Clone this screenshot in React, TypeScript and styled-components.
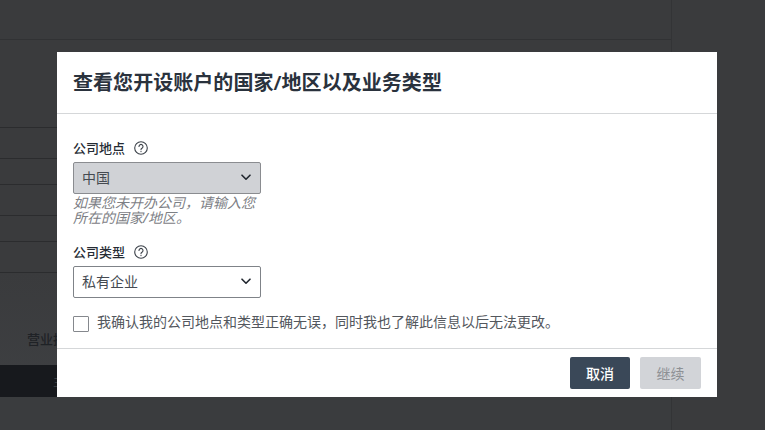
import React from "react";
import styled, { createGlobalStyle } from "styled-components";

const Global = createGlobalStyle`
  html, body { margin: 0; padding: 0; background: #3a3b3d; }
  body { font-family: "Noto Sans", "Noto Sans CJK SC", sans-serif; }
  * { box-sizing: border-box; }
`;

const Page = styled.div`
  position: relative;
  width: 765px;
  height: 430px;
  overflow: hidden;
  background: #3a3b3d;
`;

const BackPanel = styled.div`
  width: 672px;
  height: 430px;
  border-right: 1px solid #333436;
  display: flex;
  flex-direction: column;
`;

const TopBand = styled.div`
  height: 40px;
  border-bottom: 1px solid #313234;
  flex: none;
`;

const RowList = styled.div`
  margin-top: 87px;
  border-top: 1px solid #2b2c2e;
  flex: none;
`;

const BackRow = styled.div<{ $h: number }>`
  height: ${(p) => p.$h}px;
  border-bottom: 1px solid #2b2c2e;
`;

const LowerArea = styled.div`
  flex: 1;
  display: flex;
  flex-direction: column;
  justify-content: flex-end;
  background: linear-gradient(#3a3b3d, #3f4144);
`;

const BackLabel = styled.div`
  height: 92px;
  padding: 57px 0 0 27px;
  font-size: 13px;
  font-weight: 500;
  line-height: 18px;
  color: #1f2226;
  white-space: nowrap;
`;

const DarkBar = styled.div`
  height: 32px;
  background: #17191d;
  padding-left: 53px;
  font-size: 13px;
  line-height: 32px;
  color: #3a3d41;
`;

const BottomGap = styled.div`
  height: 34px;
  background: #3a3c3e;
`;

const Modal = styled.div`
  position: absolute;
  left: 57px;
  top: 52px;
  width: 660px;
  height: 345px;
  background: #fff;
  display: flex;
  flex-direction: column;
`;

const Header = styled.div`
  height: 62px;
  flex: none;
  padding: 17px 16px 0;
  border-bottom: 1px solid #d5d7d9;
`;

const Title = styled.h2`
  margin: 0;
  font-size: 20px;
  line-height: 28px;
  font-weight: 600;
  letter-spacing: 0.05px;
  color: #2a323d;
`;

const Body = styled.div`
  flex: 1;
  padding: 26px 16px 0;
  display: flex;
  flex-direction: column;
`;

const LabelRow = styled.div`
  display: flex;
  align-items: center;
  gap: 9px;
  height: 16px;
  margin-bottom: 6px;
`;

const Label = styled.span`
  font-size: 13px;
  line-height: 16px;
  font-weight: 500;
  color: #262c34;
`;

const SelectBox = styled.div<{ $disabled?: boolean }>`
  width: 188px;
  height: 32px;
  flex: none;
  border: 1px solid ${(p) => (p.$disabled ? "#8a8c90" : "#7f8388")};
  border-radius: 2px;
  background: ${(p) => (p.$disabled ? "#d0d2d6" : "#fff")};
  display: flex;
  align-items: center;
  justify-content: space-between;
  padding: 0 9px 2px 8px;
  font-size: 14px;
  color: #454a51;
`;

const Hint = styled.div`
  width: 188px;
  margin-top: 1px;
  font-size: 14px;
  line-height: 15px;
  font-style: italic;
  color: #7d8085;
  height: 30px;
  margin-bottom: 19px;
`;

const CheckRow = styled.div`
  display: flex;
  align-items: flex-start;
  gap: 8px;
  margin-top: 17px;
`;

const CheckBox = styled.span`
  width: 16px;
  height: 16px;
  margin-top: 1px;
  flex: none;
  border: 1px solid #85888d;
  border-radius: 1px;
  background: #fff;
`;

const CheckText = styled.span`
  font-size: 14px;
  line-height: 14px;
  color: #53575d;
  white-space: nowrap;
`;

const Footer = styled.div`
  height: 49px;
  flex: none;
  border-top: 1px solid #d5d7d9;
  padding: 8px 16px 0 0;
  display: flex;
  justify-content: flex-end;
  gap: 10px;
`;

const Button = styled.div<{ $primary?: boolean }>`
  width: ${(p) => (p.$primary ? 60 : 61)}px;
  height: 32px;
  border-radius: 2px;
  background: ${(p) => (p.$primary ? "#3a4858" : "#d2d4d8")};
  color: ${(p) => (p.$primary ? "#ffffff" : "#8d9094")};
  font-size: 14px;
  font-weight: ${(p) => (p.$primary ? 500 : 400)};
  display: flex;
  align-items: center;
  justify-content: center;
`;

const HelpIcon = () => (
  <svg width="14" height="14" viewBox="0 0 14 14" fill="none" stroke="#3c424a" strokeWidth="1.1" strokeLinecap="round">
    <circle cx="7" cy="7" r="6.3" />
    <path d="M5 5.4a2 2 0 1 1 3 1.75c-.7.4-1 .8-1 1.45" />
    <path d="M7 10.4v.2" />
  </svg>
);

const Chevron = () => (
  <svg width="10" height="7" viewBox="0 0 10 7" fill="none" stroke="#20262e" strokeWidth="1.6" strokeLinecap="round" strokeLinejoin="round">
    <path d="M1 1.2 5 5.2l4-4" />
  </svg>
);

export default function App() {
  return (
    <Page>
      <Global />
      <BackPanel>
        <TopBand />
        <RowList>
          {[31, 26, 31, 26, 31].map((h, i) => (
            <BackRow key={i} $h={h} />
          ))}
        </RowList>
        <LowerArea>
          <BackLabel>营业执照</BackLabel>
          <DarkBar>主</DarkBar>
          <BottomGap />
        </LowerArea>
      </BackPanel>
      <Modal>
        <Header>
          <Title>查看您开设账户的国家/地区以及业务类型</Title>
        </Header>
        <Body>
          <LabelRow>
            <Label>公司地点</Label>
            <HelpIcon />
          </LabelRow>
          <SelectBox $disabled>
            中国
            <Chevron />
          </SelectBox>
          <Hint>如果您未开办公司，请输入您所在的国家/地区。</Hint>
          <LabelRow>
            <Label>公司类型</Label>
            <HelpIcon />
          </LabelRow>
          <SelectBox>
            私有企业
            <Chevron />
          </SelectBox>
          <CheckRow>
            <CheckBox />
            <CheckText>我确认我的公司地点和类型正确无误，同时我也了解此信息以后无法更改。</CheckText>
          </CheckRow>
        </Body>
        <Footer>
          <Button $primary>取消</Button>
          <Button>继续</Button>
        </Footer>
      </Modal>
    </Page>
  );
}
